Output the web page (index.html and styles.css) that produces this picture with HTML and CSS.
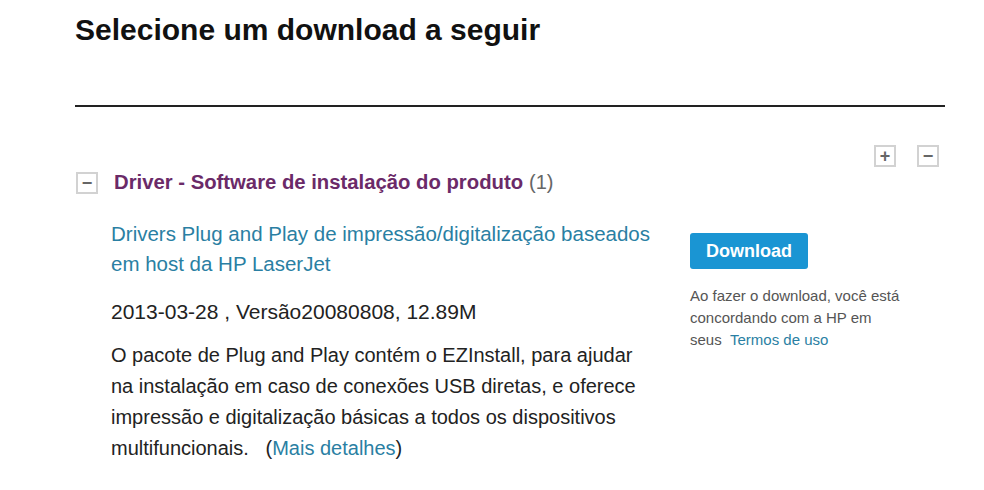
FILE: index.html
```html
<!DOCTYPE html>
<html lang="pt">
<head>
  <meta charset="UTF-8">
  <title>Selecione um download a seguir</title>
  <link rel="stylesheet" href="styles.css">
</head>
<body>
  <div class="page">
    <h1 class="title">Selecione um download a seguir</h1>
    <div class="rule"></div>

    <div class="toggles">
      <span class="box">+</span>
      <span class="box">&minus;</span>
    </div>

    <div class="group-head">
      <span class="box">&minus;</span>
      <span class="group-name">Driver - Software de instalação do produto</span>
      <span class="group-count">(1)</span>
    </div>

    <div class="item">
      <div class="item-main">
        <a class="item-link" href="#">Drivers Plug and Play de impressão/digitalização baseados em host da HP LaserJet</a>
        <p class="item-meta">2013-03-28 , Versão20080808, 12.89M</p>
        <p class="item-desc">O pacote de Plug and Play contém o EZInstall, para ajudar na instalação em caso de conexões USB diretas, e oferece impressão e digitalização básicas a todos os dispositivos multifuncionais.&nbsp;&nbsp; (<a href="#">Mais detalhes</a>)</p>
      </div>
      <div class="item-side">
        <button class="btn-download">Download</button>
        <p class="terms">Ao fazer o download, você está<br>concordando com a HP em<br>seus &nbsp;<a href="#">Termos de uso</a></p>
      </div>
    </div>
  </div>
</body>
</html>
```

FILE: styles.css
```css
body {
  margin: 0;
  background: #fff;
  font-family: "Liberation Sans", Arial, sans-serif;
  color: #222;
}
.page {
  width: 870px;
  padding-left: 75px;
}
.title {
  margin: 0;
  padding-top: 12px;
  font-size: 30px;
  line-height: 36px;
  font-weight: bold;
  color: #111;
}
.rule {
  margin-top: 57px;
  height: 2px;
  background: #222;
}
.toggles {
  display: flex;
  justify-content: flex-end;
  gap: 21px;
  margin-top: 38px;
  padding-right: 6px;
}
.box {
  display: inline-flex;
  align-items: center;
  justify-content: center;
  width: 18px;
  height: 18px;
  border: 2px solid #d2d2d2;
  color: #666;
  font-size: 18px;
  font-weight: bold;
  line-height: 1;
}
.group-head {
  display: flex;
  align-items: center;
  gap: 16px;
  margin-top: 4px;
  padding-left: 1px;
}
.group-name {
  color: #6b2a68;
  font-size: 20.3px;
  font-weight: bold;
  margin-right: -10px;
}
.group-count {
  color: #666;
  font-size: 20px;
}
.item {
  display: flex;
  padding-left: 36px;
  margin-top: 25px;
}
.item-main {
  width: 560px;
}
.item-link {
  display: block;
  color: #2a7fa3;
  font-size: 20.5px;
  line-height: 30px;
  text-decoration: none;
}
.item-meta {
  margin: 17px 0 0;
  font-size: 21px;
  line-height: 31px;
}
.item-desc {
  width: 530px;
  margin: 13px 0 0;
  font-size: 20px;
  line-height: 31px;
}
.item-desc a,
.terms a {
  color: #2a7fa3;
  text-decoration: none;
}
.item-side {
  margin-left: 19px;
  padding-top: 14px;
}
.btn-download {
  display: block;
  width: 118px;
  height: 36px;
  border: none;
  border-radius: 3px;
  background: #1a95d3;
  color: #fff;
  font-family: inherit;
  font-size: 18px;
  font-weight: bold;
}
.terms {
  margin: 16px 0 0;
  font-size: 15px;
  line-height: 22px;
  color: #555;
}
```
